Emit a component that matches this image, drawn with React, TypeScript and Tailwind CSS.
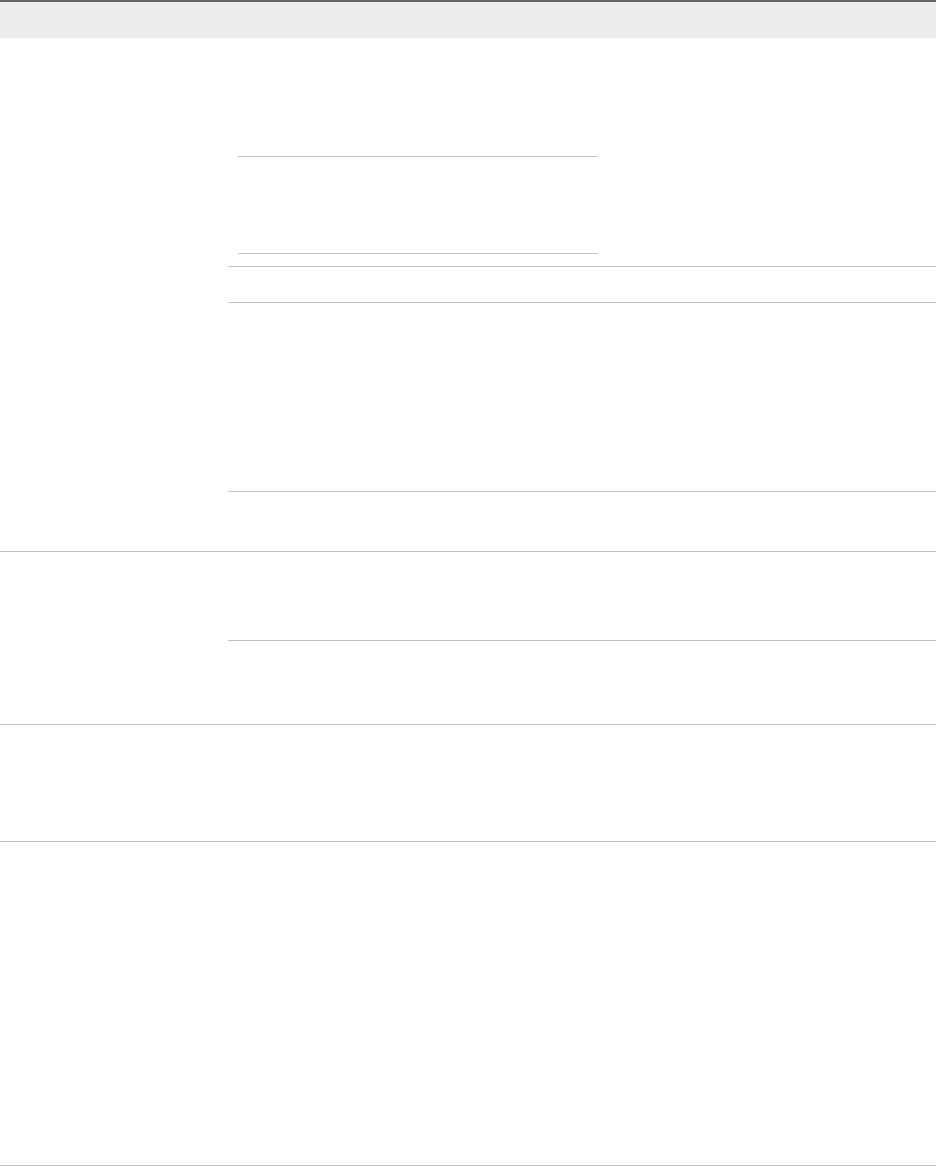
const line = "border-b border-[#c3c3c3]";

function Cols({ h, last }: { h: string; last?: boolean }) {
  return (
    <div className={`flex ${h} ${last ? "" : line}`}>
      <div className="w-[380px]" />
      <div className="flex-1" />
    </div>
  );
}

export default function App() {
  return (
    <div className="w-[936px] bg-white font-['Liberation_Sans',sans-serif]">
      {/* header */}
      <div className="flex h-[38px] border-t-2 border-[#666666] bg-[#ebebeb]">
        <div className="w-[608px]" />
        <div className="flex-1" />
      </div>

      {/* group A */}
      <div className={`flex ${line}`}>
        <div className="w-[228px]" />
        <div className="flex flex-1 flex-col">
          <div className={`flex h-[229px] ${line}`}>
            <div className="w-[380px] px-[10px] pt-[118px]">
              <div className="h-[98px] border-y border-[#c3c3c3]" />
            </div>
            <div className="flex-1" />
          </div>
          <Cols h="h-[36px]" />
          <Cols h="h-[189px]" />
          <Cols h="h-[59px]" last />
        </div>
      </div>

      {/* group B */}
      <div className={`flex ${line}`}>
        <div className="w-[228px]" />
        <div className="flex flex-1 flex-col">
          <Cols h="h-[89px]" />
          <Cols h="h-[83px]" last />
        </div>
      </div>

      {/* group C */}
      <div className={`flex h-[117px] ${line}`}>
        <div className="w-[608px]" />
        <div className="flex-1" />
      </div>

      {/* group D */}
      <div className={`flex h-[324px] ${line}`}>
        <div className="w-[608px]" />
        <div className="flex-1" />
      </div>
    </div>
  );
}
